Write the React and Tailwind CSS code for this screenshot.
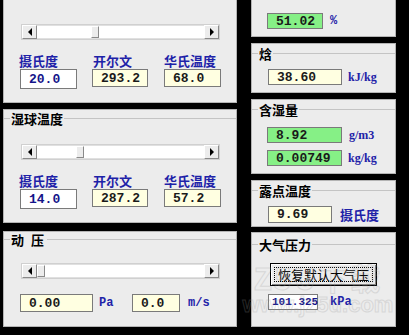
import React from 'react';

const cjk = "font-['Noto_Sans_CJK_SC',sans-serif]";
const mono = "font-['Liberation_Mono',monospace]";
const serif = "font-['Liberation_Serif',serif]";

// boxes that hold the numbers
const Field = ({ value, w, tone = 'yellow', h = 'h-[19px]', text = 'text-[13px] pl-[8px]' }) => {
  const bg = tone === 'white' ? 'bg-white text-[#14148a]' : tone === 'green' ? 'bg-[#86f086] text-[#1a1a1a]' : 'bg-[#ffffe1] text-[#1a1a1a]';
  return (
    <div className={`${w} ${h} ${bg} shrink-0 border border-[#7a7a7a] flex items-center ${text} ${mono} font-bold leading-none`}>
      {value}
    </div>
  );
};

const Legend = ({ text, spacing = '' }) => (
  <div className="flex items-center h-[14px]">
    <div className="w-[6px] h-px bg-[#c4c4c4]" />
    <span className={`px-[1px] text-[13px] font-bold leading-none text-black ${spacing} ${cjk}`}>{text}</span>
    <div className="flex-1 h-px bg-[#c4c4c4]" />
  </div>
);

const ArrowBtn = ({ dir }) => (
  <div className="w-[15px] h-full bg-[#ececec] border-t border-l border-t-white border-l-white border-b border-r border-b-[#8a8a8a] border-r-[#8a8a8a] flex items-center justify-center">
    {dir === 'left' ? (
      <div className="w-0 h-0 border-y-[4px] border-y-transparent border-r-[4px] border-r-black" />
    ) : (
      <div className="w-0 h-0 border-y-[4px] border-y-transparent border-l-[4px] border-l-black" />
    )}
  </div>
);

const Scroll = ({ offset }) => (
  <div className="flex h-[16px] w-[199px] border border-[#d0d0d0]">
    <ArrowBtn dir="left" />
    <div className="flex-1 flex bg-white border-y border-[#e0e0e0]">
      <div className={offset} />
      <div className="w-[8px] h-full bg-[#ececec] border-t border-l border-t-white border-l-white border-b border-r border-b-[#8a8a8a] border-r-[#8a8a8a]" />
    </div>
    <ArrowBtn dir="right" />
  </div>
);

const Label = ({ text, w }) => (
  <div className={`${w} text-[13px] font-bold leading-[14px] text-[#1e22a8] ${cjk}`}>{text}</div>
);

const Unit = ({ text, font = serif, className = '' }) => (
  <div className={`text-[12px] font-bold leading-none text-[#1e22a8] ${font} ${className}`}>{text}</div>
);

const panel = 'bg-[#ececec] border border-[#b4b4b4] box-border';

const TempPanel = ({ title, offset, c, k, f, className }) => (
  <div className={`${panel} h-[114px] ${className}`}>
    <div className="pt-px">
      {title ? <Legend text={title} /> : <div className="h-[14px]" />}
    </div>
    <div className="mt-[19px] pl-[17px]">
      <Scroll offset={offset} />
    </div>
    <div className="mt-[14px] pl-[15px] flex">
      <Label text="摄氏度" w="w-[74px]" />
      <Label text="开尔文" w="w-[71px]" />
      <Label text="华氏温度" w="w-[60px]" />
    </div>
    <div className="mt-[1px] pl-[16px] flex">
      <div className="w-[72px]"><Field value={c} w="w-[57px]" tone="white" h="h-[20px]" /></div>
      <div className="w-[72px]"><Field value={k} w="w-[56px]" h="h-[18px]" /></div>
      <Field value={f} w="w-[57px]" h="h-[18px]" />
    </div>
  </div>
);

const RightPanel = ({ title, className, children }) => (
  <div className={`${panel} ${className}`}>
    <div className="pt-[2px]">
      {title ? <Legend text={title} /> : <div className="h-[14px]" />}
    </div>
    {children}
  </div>
);

export default function App() {
  return (
    <div className="relative w-[409px] h-[335px] bg-black overflow-hidden flex">
      {/* left column */}
      <div className="ml-[3px] w-[234px] flex flex-col">
        <TempPanel className="mt-[-11px]" offset="w-[54px]" c="20.0" k="293.2" f="68.0" />
        <TempPanel className="mt-[6px]" title="湿球温度" offset="w-[39px]" c="14.0" k="287.2" f="57.2" />
        <div className={`${panel} mt-[8px] h-[96px]`}>
          <Legend text="动 压" spacing="tracking-[2px]" />
          <div className="mt-[17px] pl-[17px]">
            <Scroll offset="w-0" />
          </div>
          <div className="mt-[15px] pl-[16px] flex items-center">
            <Field value="0.00" w="w-[73px]" h="h-[18px]" />
            <Unit text="Pa" font={mono} className="ml-[6px] w-[33px]" />
            <Field value="0.0" w="w-[48px]" h="h-[18px]" />
            <Unit text="m/s" font={mono} className="ml-[8px]" />
          </div>
        </div>
      </div>

      {/* right column */}
      <div className="ml-[14px] w-[145px] flex flex-col">
        <RightPanel className="mt-[-13px] h-[50px]">
          <div className="mt-[9px] pl-[15px] flex items-center">
            <Field value="51.02" w="w-[56px]" tone="green" h="h-[16px]" />
            <Unit text="%" font={mono} className="ml-[7px]" />
          </div>
        </RightPanel>
        <RightPanel className="mt-[6px] h-[50px]" title="焓">
          <div className="mt-[9px] pl-[16px] flex items-center">
            <Field value="38.60" w="w-[74px]" h="h-[16px]" />
            <Unit text="kJ/kg" className="ml-[6px]" />
          </div>
        </RightPanel>
        <RightPanel className="mt-[6px] h-[75px]" title="含湿量">
          <div className="mt-[11px] pl-[15px] flex items-center">
            <Field value="8.92" w="w-[75px]" tone="green" h="h-[16px]" />
            <Unit text="g/m3" className="ml-[7px]" />
          </div>
          <div className="mt-[7px] pl-[15px] flex items-center">
            <Field value="0.00749" w="w-[75px]" tone="green" h="h-[16px]" />
            <Unit text="kg/kg" className="ml-[6px]" />
          </div>
        </RightPanel>
        <RightPanel className="mt-[6px] h-[47px]" title="露点温度">
          <div className="mt-[9px] pl-[16px] flex items-center">
            <Field value="9.69" w="w-[64px]" h="h-[17px]" />
            <span className={`ml-[8px] text-[13px] font-bold leading-none text-[#1e22a8] ${cjk}`}>摄氏度</span>
          </div>
        </RightPanel>
        <div className={`${panel} mt-[5px] h-[95px]`}>
          <div className="pt-[4px]">
            <Legend text="大气压力" />
          </div>
          <div className="mt-[12px] pl-[18px]">
            <div className="w-[107px] h-[23px] bg-[#ececec] border border-black shadow-[inset_1px_1px_0_#ffffff,inset_-1px_-1px_0_#808080] p-[3px]">
              <div className={`w-full h-full border border-dotted border-black flex items-center justify-center text-[13px] leading-none text-black ${cjk}`}>
                恢复默认大气压
              </div>
            </div>
          </div>
          <div className="mt-[8px] pl-[16px] flex items-center">
            <Field value="101.325" w="w-[50px]" tone="white" h="h-[16px]" text="text-[11px] pl-[3px]" />
            <Unit text="kPa" font={mono} className="ml-[12px]" />
          </div>
        </div>
      </div>

      {/* watermark */}
      <div className="absolute left-[228px] top-[262px] w-[180px] flex flex-col items-center pointer-events-none opacity-25">
        <span className={`text-[30px] font-bold leading-none tracking-[2px] text-transparent [-webkit-text-stroke:1px_#9a9a9a] ${cjk}`}>Z5U下载</span>
        <span className="mt-[2px] text-[22px] font-bold leading-none text-transparent [-webkit-text-stroke:1px_#9a9a9a] font-['Liberation_Sans',sans-serif]">www.jz5u.com</span>
      </div>
    </div>
  );
}
